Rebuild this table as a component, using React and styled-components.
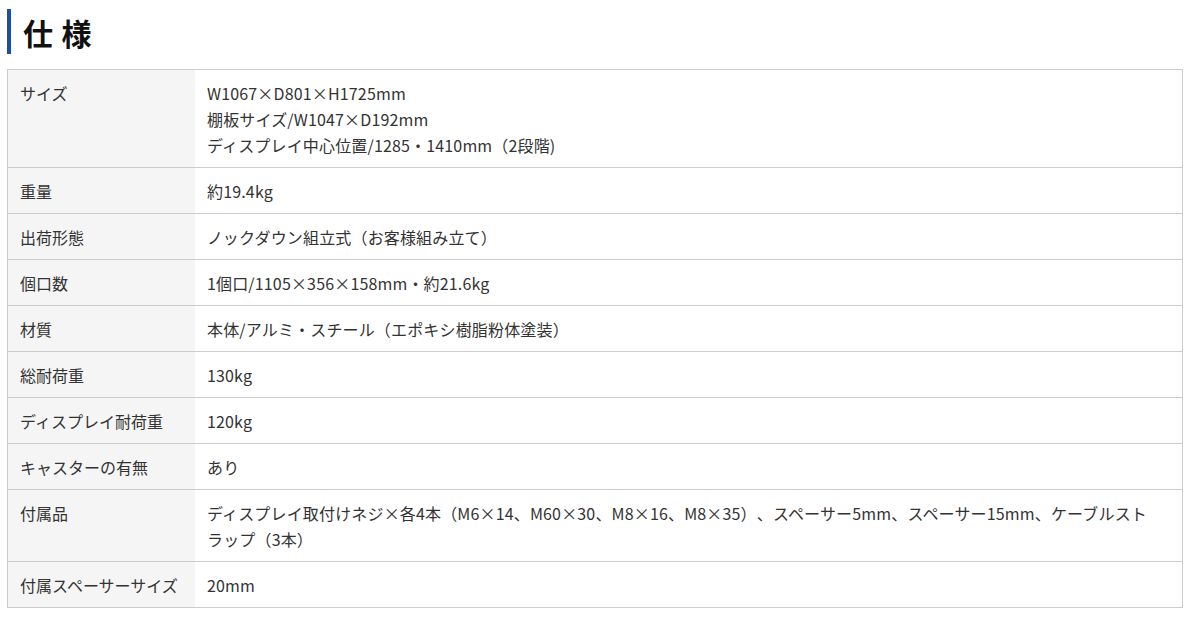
import React from "react";
import styled, { createGlobalStyle } from "styled-components";

const Global = createGlobalStyle`
  html, body { margin: 0; padding: 0; background: #fff; }
  body {
    font-family: "Noto Sans CJK JP", "Noto Sans", sans-serif;
    color: #333;
    text-spacing-trim: space-all;
  }
`;

const Page = styled.div`
  padding: 9px 7px 8px 7px;
`;

const Heading = styled.h2`
  margin: 0 0 15px 0;
  border-left: 4px solid #1c4ea5;
  padding-left: 12px;
  height: 45px;
  display: flex;
  align-items: center;
  font-size: 30px;
  font-weight: 700;
  letter-spacing: 0.28em;
  color: #111;
  line-height: 1;
`;

const Table = styled.table`
  width: 100%;
  border-collapse: collapse;
  border: 1px solid #cccccc;
  font-size: 16px;
  line-height: 26px;
`;

const Row = styled.tr`
  border-top: 1px solid #cccccc;
`;

const Label = styled.th`
  width: 163px;
  background: #f5f5f5;
  text-align: left;
  vertical-align: top;
  font-weight: 400;
  padding: 10px 12px 9px 12px;
  color: #333;
  white-space: nowrap;
`;

const Value = styled.td`
  vertical-align: top;
  padding: 10px 12px 9px 12px;
  color: #333;
  letter-spacing: 0.01em;
  line-break: strict;
`;

const rows = [
  ["サイズ", ["W1067×D801×H1725mm", "棚板サイズ/W1047×D192mm", "ディスプレイ中心位置/1285・1410mm（2段階)"]],
  ["重量", ["約19.4kg"]],
  ["出荷形態", ["ノックダウン組立式（お客様組み立て）"]],
  ["個口数", ["1個口/1105×356×158mm・約21.6kg"]],
  ["材質", ["本体/アルミ・スチール（エポキシ樹脂粉体塗装）"]],
  ["総耐荷重", ["130kg"]],
  ["ディスプレイ耐荷重", ["120kg"]],
  ["キャスターの有無", ["あり"]],
  ["付属品", ["ディスプレイ取付けネジ×各4本（M6×14、M60×30、M8×16、M8×35）、スペーサー5mm、スペーサー15mm、ケーブルストラップ（3本）"]],
  ["付属スペーサーサイズ", ["20mm"]],
];

export default function App() {
  return (
    <Page lang="ja">
      <Global />
      <Heading>仕様</Heading>
      <Table>
        <tbody>
          {rows.map(([k, v]) => (
            <Row key={k}>
              <Label>{k}</Label>
              <Value>
                {v.map((line, i) => (
                  <React.Fragment key={i}>
                    {i > 0 && <br />}
                    {line}
                  </React.Fragment>
                ))}
              </Value>
            </Row>
          ))}
        </tbody>
      </Table>
    </Page>
  );
}
